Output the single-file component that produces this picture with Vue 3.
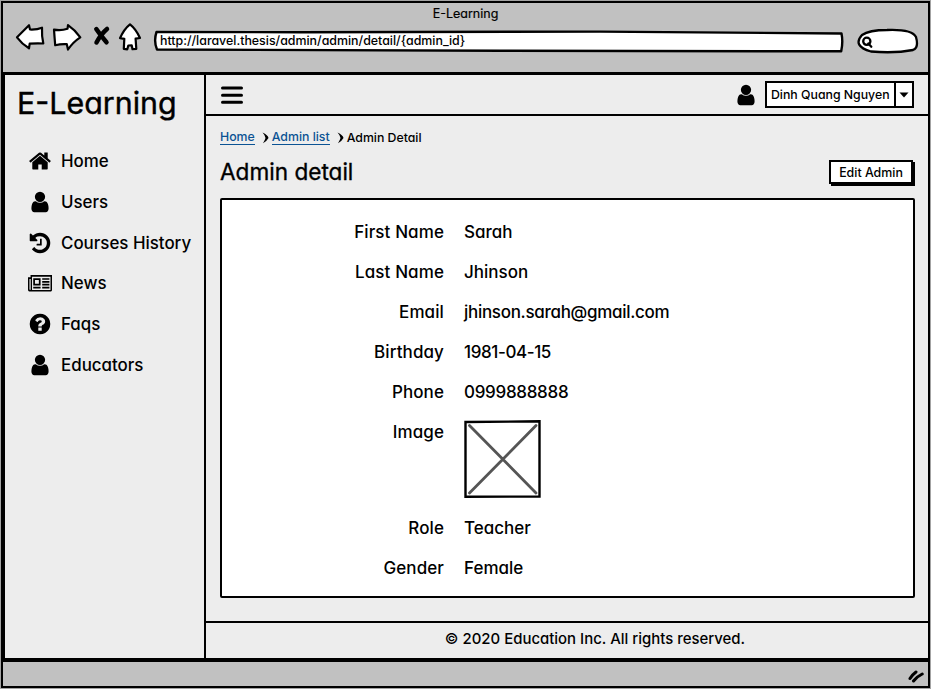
<script setup>
const icons = {
  home: 'M1472 992v480q0 26-19 45t-45 19h-384v-384h-256v384h-384q-26 0-45-19t-19-45v-480q0-1 .5-3t.5-3l575-474 575 474q1 2 1 6zm223-69l-62 74q-8 9-21 11h-3q-13 0-21-7l-692-577-692 577q-12 8-24 7-13-2-21-11l-62-74q-8-10-7-23.5t11-21.5l719-599q32-26 76-26t76 26l244 204v-195q0-14 9-23t23-9h192q14 0 23 9t9 23v408l219 182q10 8 11 21.5t-7 23.5z',
  user: 'M1536 1399q0 109-62.5 187t-150.5 78h-854q-88 0-150.5-78t-62.5-187q0-85 8.5-160.5t31.5-152 58.5-131 94-89 134.5-34.5q131 128 313 128t313-128q76 0 134.5 34.5t94 89 58.5 131 31.5 152 8.5 160.5zm-256-887q0 159-112.5 271.5t-271.5 112.5-271.5-112.5-112.5-271.5 112.5-271.5 271.5-112.5 271.5 112.5 112.5 271.5z',
  history: 'M1664 896q0 156-61 298t-164 245-245 164-298 61q-172 0-327-72.5t-264-204.5q-7-10-6.5-22.5t8.5-20.5l137-138q10-9 25-9 16 2 23 12 73 95 179 147t225 52q104 0 198.5-40.5t163.5-109.5 109.5-163.5 40.5-198.5-40.5-198.5-109.5-163.5-163.5-109.5-198.5-40.5q-98 0-188 35.5t-160 101.5l137 138q31 30 14 69-17 40-59 40h-448q-26 0-45-19t-19-45v-448q0-42 40-59 39-17 69 14l130 129q107-101 244.5-156.5t284.5-55.5q156 0 298 61t245 164 164 245 61 298zm-640-288v448q0 14-9 23t-23 9h-320q-14 0-23-9t-9-23v-64q0-14 9-23t23-9h224v-352q0-14 9-23t23-9h64q14 0 23 9t9 23z',
  news: 'M0 300H1792V1420Q1792 1530 1710 1530H100Q0 1530 0 1400ZM110 590V1370Q120 1420 160 1420Q200 1410 200 1360V590ZM0 300V460H190V300ZM300 420V1410H1680V420ZM390 540H940V1080H390ZM520 670V950H810V670ZM1060 540H1600V660H1060ZM1060 750H1600V870H1060ZM1060 960H1600V1080H1060ZM390 1180H940V1300H390ZM1060 1180H1600V1300H1060Z',
  help: 'M1024 1376v-192q0-14-9-23t-23-9h-192q-14 0-23 9t-9 23v192q0 14 9 23t23 9h192q14 0 23-9t9-23zm256-672q0-88-55.5-163t-138.5-116-170-41q-243 0-371 213-15 24 8 42l132 100q7 6 19 6 16 0 25-12 53-68 86-92 34-24 86-24 48 0 85.5 26t37.5 59q0 38-20 61t-68 45q-63 28-115.5 86.5t-52.5 125.5v36q0 14 9 23t23 9h192q14 0 23-9t9-23q0-19 21.5-49.5t54.5-49.5q32-18 49-28.5t46-35 44.5-48 28-60.5 12.5-81zm384 192q0 209-103 385.5t-279.5 279.5-385.5 103-385.5-103-279.5-279.5-103-385.5 103-385.5 279.5-279.5 385.5-103 385.5 103 279.5 279.5 103 385.5z',
}
const menu = [
  { label: 'Home', icon: 'home' },
  { label: 'Users', icon: 'user' },
  { label: 'Courses History', icon: 'history' },
  { label: 'News', icon: 'news' },
  { label: 'Faqs', icon: 'help' },
  { label: 'Educators', icon: 'user' },
]
const fields = [
  { label: 'First Name', value: 'Sarah' },
  { label: 'Last Name', value: 'Jhinson' },
  { label: 'Email', value: 'jhinson.sarah@gmail.com', fit: 'tight' },
  { label: 'Birthday', value: '1981-04-15', fit: 'tighter' },
  { label: 'Phone', value: '0999888888', fit: 'tight' },
  { label: 'Image', image: true },
  { label: 'Role', value: 'Teacher' },
  { label: 'Gender', value: 'Female' },
]
</script>

<template>
  <div class="window">
    <header class="chrome">
      <div class="window-title">E-Learning</div>
      <div class="toolbar">
        <svg class="nav back" viewBox="14 22 32 30"><path d="M17 37.3L29 25.2L30 29.5Q37 29.8 42 27.7Q41.6 36 43.3 43.5Q36 43.2 29.7 43.7L29 48.3Q22 44 17 37.3Z" /></svg>
        <svg class="nav forward" viewBox="51 22 32 30"><path d="M54 29.7Q61 31 67.5 28.8L68 25.2Q75 30 80.3 37.3Q73 42 68 49.5L66.8 44.2Q61 43.8 55.2 45.2Q54.5 37 54 29.7Z" /></svg>
        <svg class="nav stop" viewBox="92 22 20 30"><path d="M96.3 29Q101 36 106.5 42.3M107 29Q101 34 96.500 42.5" /></svg>
        <svg class="nav house" viewBox="117 22 26 30"><path d="M130 24.3Q136 29 140 38L135.6 38.6L136.3 48.8L132.5 49.2L131.7 45.3L128.3 45.5L127.3 49.3L123.8 48.9L124.3 38.8L120 38.2Q124 29 130 24.3Z" /></svg>
        <div class="url">
          <svg class="outline" viewBox="153 28 692 26"><path d="M156.5 32L300 32.2L600 31.6L841.5 33.5Q843.2 42 841.2 51.3L500 50.8L157 49.5Q153.5 41 156.5 32Z" /></svg>
          <span>http://laravel.thesis/admin/admin/detail/{admin_id}</span>
        </div>
        <svg class="search" viewBox="857 27 62 28">
          <path d="M862 35Q869 30 887 30Q912 29 916 37Q919 48 913 50Q895 53.5 871 51.5Q852 46 862 35Z" />
          <circle cx="866.8" cy="41.3" r="3.6" /><path d="M868.3 43.5L871.3 46.700" />
        </svg>
      </div>
    </header>

    <div class="body">
      <aside class="sidebar">
        <h1>E-Learning</h1>
        <nav>
          <a v-for="item in menu" :key="item.label" class="menu-item">
            <svg viewBox="0 0 1792 1792"><path fill-rule="evenodd" :d="icons[item.icon]" /></svg>
            <span>{{ item.label }}</span>
          </a>
        </nav>
      </aside>

      <section class="page">
        <div class="topbar">
          <svg class="burger" viewBox="0 0 22 20"><path d="M1.5 3H20.5M1.5 10.2H20.5M1.5 17.3H20.5" /></svg>
          <div class="account">
            <svg class="avatar" viewBox="0 0 1792 1792"><path :d="icons.user" /></svg>
            <div class="select">
              <span class="name">Dinh Quang Nguyen</span>
              <span class="caret"><svg viewBox="0 0 10 6"><path d="M.5 .5H9.5L5 5.5Z" /></svg></span>
            </div>
          </div>
        </div>

        <main class="content">
          <div class="crumbs">
            <a>Home</a>
            <svg viewBox="0 0 7 12"><path d="M.5 .5Q6 3 6.5 6Q5 9 1 11.2Q3 8 3.5 6Q3 3 .5 .5Z" /></svg>
            <a>Admin list</a>
            <svg viewBox="0 0 7 12"><path d="M.5 .5Q6 3 6.5 6Q5 9 1 11.2Q3 8 3.5 6Q3 3 .5 .5Z" /></svg>
            <span>Admin Detail</span>
          </div>
          <div class="heading">
            <h2>Admin detail</h2>
            <button>Edit Admin</button>
          </div>
          <dl class="card">
            <div v-for="f in fields" :key="f.label" class="field" :class="{ tall: f.image }">
              <dt>{{ f.label }}</dt>
              <dd :class="f.fit">
                <svg v-if="f.image" class="placeholder" viewBox="0 0 77 78">
                  <path class="cross" d="M5.5 5.5L72 73M72 5.5L5.5 73" />
                  <path class="frame" d="M1.5 2L75.5 1.3V76.5L1.5 76.7Z" />
                </svg>
                <template v-else>{{ f.value }}</template>
              </dd>
            </div>
          </dl>
        </main>

        <footer class="footer">© 2020 Education Inc. All rights reserved.</footer>
      </section>
    </div>

    <div class="statusbar">
      <svg viewBox="0 0 16 14"><path d="M2 9.5Q4 6 8 3M5.5 12Q9 7.5 14.2 5" /></svg>
    </div>
  </div>
</template>

<style>
body {
  background: #a3a3a3;
}
</style>

<style scoped>
* {
  box-sizing: border-box;
}
.window {
  width: 931px;
  height: 689px;
  display: flex;
  flex-direction: column;
  padding: 2px;
  border: 1px solid #a3a3a3;
  font-family: Inter, "Liberation Sans", sans-serif;
  font-feature-settings: "cv11";
  font-weight: 500;
  color: #000;
  background: #000;
}
.chrome {
  height: 69px;
  background: #c1c1c1;
}
.window-title {
  height: 19px;
  line-height: 22px;
  font-size: 12.5px;
  font-weight: 400;
  -webkit-text-stroke: 0.2px #000;
  text-align: center;
}
.toolbar {
  display: flex;
  align-items: flex-start;
  padding-left: 11px;
}
.nav {
  height: 30px;
  fill: #fff;
  stroke: #000;
  stroke-width: 2.2;
  stroke-linejoin: round;
  stroke-linecap: round;
}
.back {
  width: 32px;
}
.forward {
  width: 32px;
  margin-left: 5px;
}
.stop {
  width: 20px;
  margin-left: 9px;
  fill: none;
  stroke-width: 4.5;
}
.house {
  width: 26px;
  margin-left: 5px;
}
.url {
  position: relative;
  width: 692px;
  height: 26px;
  margin: 6px 0 0 10px;
  padding-left: 7px;
  font-size: 12.4px;
  line-height: 26px;
}
.outline {
  position: absolute;
  left: 0;
  top: 0;
  width: 692px;
  height: 26px;
  fill: #fff;
  stroke: #000;
  stroke-width: 2.4;
  stroke-linejoin: round;
}
.url span {
  position: relative;
}
.search {
  width: 62px;
  height: 28px;
  margin: 5px 0 0 12px;
  fill: #fff;
  stroke: #000;
  stroke-width: 2.3;
  stroke-linecap: round;
}
.body {
  flex: 1;
  display: flex;
  min-height: 0;
  border-top: 3px solid #000;
  border-bottom: 4px solid #000;
  background: #ededed;
}
.sidebar {
  width: 203px;
  border-left: 2px solid #000;
  border-right: 2px solid #000;
}
h1 {
  margin: 0;
  padding-left: 12px;
  font-size: 30.4px;
  line-height: 56px;
  font-weight: 400;
  -webkit-text-stroke: 0.4px #000;
}
nav {
  display: flex;
  flex-direction: column;
  padding: 10px 0 0 22.5px;
}
.menu-item {
  display: flex;
  align-items: center;
  gap: 9.5px;
  height: 40.7px;
  font-size: 16.9px;
  white-space: nowrap;
}
.menu-item svg {
  width: 24px;
  height: 24px;
}
.page {
  flex: 1;
  display: flex;
  flex-direction: column;
}
.topbar {
  height: 41px;
  display: flex;
  align-items: center;
  justify-content: space-between;
  padding: 0 14px 0 15px;
  border-bottom: 2px solid #000;
}
.burger {
  width: 22px;
  height: 20px;
  stroke: #000;
  stroke-width: 3;
  stroke-linecap: round;
}
.account {
  display: flex;
  align-items: center;
}
.avatar {
  width: 24px;
  height: 24px;
  margin: 1px 7px 0 0;
}
.select {
  display: flex;
  width: 149px;
  height: 27px;
  border: 2px solid #000;
  background: #fff;
  font-size: 12.3px;
}
.name {
  flex: 1;
  padding-left: 4px;
  line-height: 23px;
  white-space: nowrap;
}
.caret {
  width: 18px;
  display: flex;
  align-items: center;
  justify-content: center;
  border-left: 2px solid #000;
}
.caret svg {
  width: 10px;
  height: 6px;
}
.content {
  flex: 1;
  padding: 13px 13px 0 14px;
}
.crumbs {
  display: flex;
  align-items: center;
  height: 16px;
  font-size: 12.3px;
  line-height: 15px;
  white-space: nowrap;
}
.crumbs a {
  color: #0b5394;
  border-bottom: 1px solid #0b5394;
}
.crumbs svg {
  width: 7px;
  height: 12px;
  margin: 1px 3px 0 7px;
}
.heading {
  display: flex;
  justify-content: space-between;
  align-items: center;
  height: 53px;
}
h2 {
  margin: 0;
  font-size: 22.6px;
  font-weight: 400;
  -webkit-text-stroke: 0.35px #000;
}
button {
  width: 84px;
  height: 24px;
  margin: 1px 2px 0 0;
  padding: 0;
  font: inherit;
  font-size: 12.4px;
  color: #000;
  background: #fff;
  border: 2px solid #000;
  box-shadow: 2px 2px 0 #000;
}
.card {
  height: 400px;
  margin: 0;
  padding-top: 12px;
  border: 2px solid #000;
  border-radius: 2px;
  background: #fff;
}
.field {
  display: flex;
  gap: 20px;
  height: 40px;
  font-size: 17px;
  line-height: 40px;
}
.field.tall {
  height: 95.5px;
}
dt {
  width: 222px;
  text-align: right;
  letter-spacing: 0.1px;
}
dd {
  margin: 0;
}
.tight {
  letter-spacing: -0.3px;
}
.tighter {
  letter-spacing: -0.4px;
}
.placeholder {
  display: block;
  width: 77px;
  height: 78px;
  margin-top: 8px;
  fill: none;
}
.cross {
  stroke: #555;
  stroke-width: 2.8;
  stroke-linecap: round;
}
.frame {
  stroke: #000;
  stroke-width: 2.4;
}
.footer {
  height: 37px;
  border-top: 2px solid #000;
  font-size: 14.95px;
  line-height: 33px;
  text-align: center;
  padding-left: 56px;
}
.statusbar {
  height: 24px;
  background: #c1c1c1;
  display: flex;
  justify-content: flex-end;
  padding: 7px 4px 0 0;
}
.statusbar svg {
  width: 16px;
  height: 14px;
  fill: none;
  stroke: #000;
  stroke-width: 3;
  stroke-linecap: round;
}
</style>
